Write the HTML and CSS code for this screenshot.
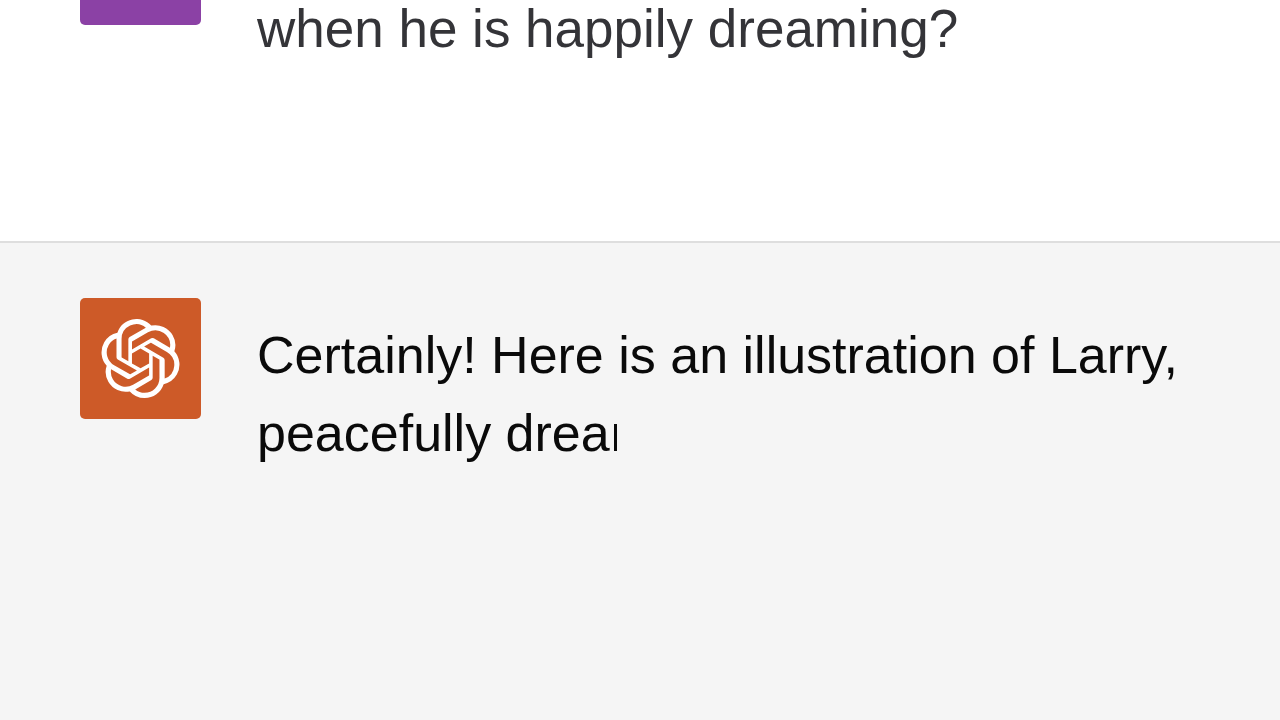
FILE: index.html
```html
<!DOCTYPE html>
<html lang="en">
<head>
    <meta charset="UTF-8">
    <meta name="viewport" content="width=device-width, initial-scale=1.0">
    <title>Chat</title>
    <link rel="stylesheet" href="styles.css">
</head>
<body>
    <main class="chat">
        <section class="message user">
            <div class="avatar"></div>
            <p class="text">when he is happily dreaming?</p>
        </section>

        <section class="message assistant">
            <div class="avatar">
                <svg class="logo" viewBox="0 0 24 24" aria-hidden="true">
                    <path d="M22.2819 9.8211a5.9847 5.9847 0 0 0-.5157-4.9108 6.0462 6.0462 0 0 0-6.5098-2.9A6.0651 6.0651 0 0 0 4.9807 4.1818a5.9847 5.9847 0 0 0-3.9977 2.9 6.0462 6.0462 0 0 0 .7427 7.0966 5.98 5.98 0 0 0 .511 4.9107 6.051 6.051 0 0 0 6.5146 2.9001A5.9847 5.9847 0 0 0 13.2599 24a6.0557 6.0557 0 0 0 5.7718-4.2058 5.9894 5.9894 0 0 0 3.9977-2.9001 6.0557 6.0557 0 0 0-.7475-7.0729zm-9.022 12.6081a4.4755 4.4755 0 0 1-2.8764-1.0408l.1419-.0804 4.7783-2.7582a.7948.7948 0 0 0 .3927-.6813v-6.7369l2.02 1.1686a.071.071 0 0 1 .038.052v5.5826a4.504 4.504 0 0 1-4.4945 4.4944zm-9.6607-4.1254a4.4708 4.4708 0 0 1-.5346-3.0137l.142.0852 4.783 2.7582a.7712.7712 0 0 0 .7806 0l5.8428-3.3685v2.3324a.0804.0804 0 0 1-.0332.0615L9.74 19.9502a4.4992 4.4992 0 0 1-6.1408-1.6464zM2.3408 7.8956a4.485 4.485 0 0 1 2.3655-1.9728V11.6a.7664.7664 0 0 0 .3879.6765l5.8144 3.3543-2.0201 1.1685a.0757.0757 0 0 1-.071 0l-4.8303-2.7865A4.504 4.504 0 0 1 2.3408 7.872zm16.5963 3.8558L13.1038 8.364 15.1192 7.2a.0757.0757 0 0 1 .071 0l4.8303 2.7913a4.4944 4.4944 0 0 1-.6765 8.1042v-5.6772a.79.79 0 0 0-.407-.667zm2.0107-3.0231l-.142-.0852-4.7735-2.7818a.7759.7759 0 0 0-.7854 0L9.409 9.2297V6.8974a.0662.0662 0 0 1 .0284-.0615l4.8303-2.7866a4.4992 4.4992 0 0 1 6.6802 4.66zM8.3065 12.863l-2.02-1.1638a.0804.0804 0 0 1-.038-.0567V6.0742a4.4992 4.4992 0 0 1 7.3757-3.4537l-.142.0805L8.704 5.459a.7948.7948 0 0 0-.3927.6813zm1.0976-2.3654l2.602-1.4998 2.6069 1.4998v2.9994l-2.5974 1.4997-2.6067-1.4997Z"/>
                </svg>
            </div>
            <p class="text">Certainly! Here is an illustration of Larry,<br>peacefully drea<span class="typing"></span></p>
        </section>
    </main>
</body>
</html>
```

FILE: styles.css
```css
* {
    box-sizing: border-box;
}
body {
    margin: 0;
    background-color: #fff;
    font-family: "Liberation Sans", Arial, sans-serif;
    font-size: 52px;
}
.chat {
    display: flex;
    flex-direction: column;
    min-height: 100vh;
}
.message {
    display: flex;
    align-items: flex-start;
    gap: 56px;
    padding: 0 80px;
}
.avatar {
    display: flex;
    flex: none;
    align-items: center;
    justify-content: center;
    width: 121px;
    height: 121px;
    border-radius: 5px;
}
.text {
    margin: 0;
    white-space: nowrap;
}
.user {
    padding-bottom: 183px;
    color: #343438;
    font-size: 53px;
    line-height: 58px;
}
/* only the lower end of the message is still on screen */
.user .avatar {
    height: 25px;
    border-radius: 0 0 5px 5px;
    background-color: #8b41a5;
}
.assistant {
    flex: 1;
    padding-top: 55px;
    border-top: 2px solid #dedede;
    background-color: #f5f5f5;
    color: #0a0a0a;
    line-height: 78px;
}
.assistant .avatar {
    background-color: #cd5a28;
}
.assistant .text {
    padding-top: 18px;
}
.logo {
    width: 79px;
    height: 79px;
    fill: #fff;
}
/* first stroke of the letter being typed */
.typing {
    display: inline-block;
    width: 3px;
    height: 27px;
    margin-left: 4px;
    background-color: #0a0a0a;
}
```
